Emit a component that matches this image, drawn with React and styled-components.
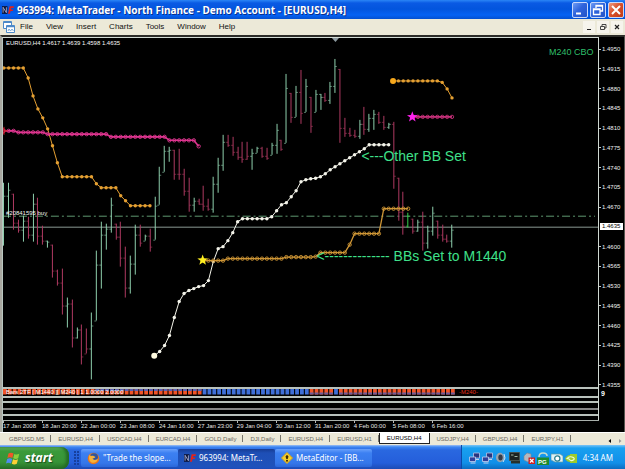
import React from "react";
import styled, { createGlobalStyle, css } from "styled-components";

const Global = createGlobalStyle`
  * { box-sizing: border-box; }
  body { margin: 0; background: #000; font-family: "Liberation Sans", Arial, sans-serif; }
  button { font: inherit; border: 0; padding: 0; margin: 0; background: none; color: inherit; cursor: default; }
`;

/* ---------- window frame ---------- */

const Desktop = styled.div`
  display: flex;
  flex-direction: column;
  min-height: 100vh;
  overflow: hidden;
`;

const TitleBar = styled.header`
  display: flex;
  align-items: center;
  gap: 3px;
  height: 19px;
  padding: 0 1px 0 2px;
  background: linear-gradient(#2b86f6 0, #0a5ae4 3px, #0355dd 9px, #0562f4 15px, #0450d0 19px);
`;

const Title = styled.h1`
  flex: 1;
  margin: 0;
  font: bold 10px/18px "Noto Sans", sans-serif;
  color: #fff;
  text-shadow: 1px 1px 0 #0a2f8a;
  white-space: nowrap;
`;

const CaptionButtons = styled.div`
  display: flex;
  gap: 2px;
`;

const CaptionButton = styled.button`
  width: 16px;
  height: 16px;
  border: 1px solid #c8d8fa;
  border-radius: 2px;
  background: ${(p) =>
    p.$close
      ? "linear-gradient(135deg, #ee9a80, #d9512c 45%, #c03a14)"
      : "linear-gradient(135deg, #6f9cf5, #2f64dc 45%, #2454c8)"};
  svg { display: block; }
`;

const MenuBar = styled.nav`
  display: flex;
  align-items: center;
  height: 16px;
  padding: 0 2px 0 3px;
  background: #ece9d8;
`;

const MenuItems = styled.div`
  display: flex;
  flex: 1;
  gap: 13px;
  margin-left: 5px;
`;

const MenuItem = styled.button`
  font-size: 8px;
  line-height: 14px;
  color: #111;
`;

const MdiButtons = styled.div`
  display: flex;
  gap: 2px;
`;

const MdiButton = styled.button`
  width: 12px;
  height: 12px;
  background: #f6f4ec;
  svg { display: block; }
`;

/* ---------- chart window ---------- */

const ChartWindow = styled.main`
  display: flex;
  flex: 1;
  border-top: 2px solid #2c2c28;
  border-left: 2px solid #a8a8a0;
  border-right: 1px solid #55554f;
  background: #000;
`;

const ChartBody = styled.div`
  flex: 1;
  min-width: 0;
  border-top: 1px solid #d4dcd6;
  border-left: 1px solid #b9c6c0;
`;

const Panes = styled.div`
  border-right: 1px solid #d0d8d2;
`;

const Plot = styled.svg`
  display: block;
  width: 100%;
  height: auto;
  font-family: "Liberation Sans", Arial, sans-serif;
`;

const IndicatorPane = styled.div`
  height: ${(p) => p.$h}px;
  border-top: 2px solid ${(p) => p.$line};
  overflow: hidden;
`;

const TimeAxis = styled.div`
  display: flex;
  height: 11px;
  border-top: 1px solid #a9b0ab;
`;

const TimeLabel = styled.span`
  flex: 0 0 6.54%;
  height: 2px;
  border-left: 1px solid #b8b8b8;
  padding-top: 1px;
  font-size: 6px;
  line-height: 8px;
  color: #e6e6e6;
  white-space: nowrap;
  text-indent: -1px;
`;

const PriceAxis = styled.aside`
  display: flex;
  flex-direction: column;
  width: 25px;
  padding-top: 7px;
`;

const Prices = styled.div`
  display: flex;
  flex-direction: column;
  justify-content: space-between;
  height: 346px;
`;

const Price = styled.span`
  display: flex;
  align-items: center;
  gap: 1px;
  height: 10px;
  font-size: 6px;
  line-height: 10px;
  color: #f0f0f0;
  &::before { content: ""; width: 2px; height: 1px; background: #c8c8c8; }
  ${(p) =>
    p.$current &&
    css`
      height: 7px;
      margin: 1px 1px 2px 1px;
      padding-left: 2px;
      background: #fff;
      color: #000;
      line-height: 7px;
      &::before { display: none; }
    `}
`;

const PaneScale = styled.span`
  padding-left: 2px;
  font: bold 7px/8px "Liberation Sans", sans-serif;
  color: #fff;
`;

/* ---------- chart tabs ---------- */

const TabStrip = styled.nav`
  display: flex;
  align-items: stretch;
  height: 13px;
  padding: 0 2px;
  border-top: 1px solid #fff;
  background: #ece9d8;
`;

const Tab = styled.button`
  height: 11px;
  padding: 0 7px;
  font-size: 6px;
  line-height: 10px;
  white-space: nowrap;
  color: #6a685f;
  background: linear-gradient(#77756c, #77756c) right 2px / 1px 7px no-repeat;
  ${(p) =>
    p.$active &&
    css`
      background: #fff;
      color: #000;
      border: solid #222;
      border-width: 0 1px 1px 1px;
    `}
`;

const TabScroll = styled.div`
  display: flex;
  gap: 6px;
  align-items: center;
  margin-left: auto;
  padding-right: 1px;
`;

/* ---------- taskbar ---------- */

const Taskbar = styled.footer`
  display: flex;
  align-items: stretch;
  height: 24px;
  background: linear-gradient(#9fc0f2 0, #3c86f3 2px, #2a68e0 5px, #245edb 18px, #1c4bb4 24px);
`;

const StartButton = styled.button`
  display: flex;
  align-items: center;
  gap: 4px;
  width: 69px;
  margin-top: 2px;
  padding-left: 6px;
  border-radius: 0 8px 8px 0;
  background: linear-gradient(#63b05f 0, #3a9a3a 4px, #379337 15px, #256f26 22px);
  box-shadow: inset -3px 0 3px #246a26;
  font: italic bold 12px/18px "Open Sans", sans-serif;
  color: #fff;
  text-shadow: 1px 1px 1px #1a4d1c;
`;

const Grip = styled.div`
  width: 5px;
  margin: 6px 2px 4px 5px;
  background: radial-gradient(circle at 1px 1px, #163f9e 1px, transparent 1px) 0 0 / 3px 3px;
`;

const TaskButton = styled.button`
  display: flex;
  align-items: center;
  gap: 3px;
  flex: 0 1 97px;
  min-width: 0;
  height: 18px;
  margin-top: 4px;
  padding-left: 6px;
  border-radius: 2px;
  font: 8px/16px "Noto Sans", sans-serif;
  color: #fff;
  white-space: nowrap;
  overflow: hidden;
  background: ${(p) =>
    p.$active ? "linear-gradient(#173c94, #1e4fb6 4px, #1f52bb)" : "linear-gradient(#68a0fa, #3c80f2 4px, #3577ea 14px, #2c67d8)"};
`;

const Tray = styled.div`
  display: flex;
  align-items: center;
  gap: 2px;
  margin-left: auto;
  padding: 2px 12px 0 7px;
  border-left: 1px solid #0b4aa8;
  background: linear-gradient(#7cc4f6 0, #19a0f0 3px, #118fe8 18px, #0c6cc0 24px);
`;

const Clock = styled.time`
  margin-left: 4px;
  font: 8px/18px "Noto Sans", sans-serif;
  color: #fff;
`;

/* ---------- chart data ---------- */

const GREEN = "#8fd0ae";
const RED = "#b03a62";

/* [high, low, rising] in plot units, one entry per four-hour bar */
const BARS = [
  [183, 246, 1], [183, 218, 1], [194, 230, 0], [220, 233, 0], [216, 242, 1], [217, 239, 0], [194, 242, 1], [198, 245, 0],
  [226, 245, 0], [241, 248, 1], [245, 278, 0], [270, 286, 0], [269, 315, 0], [298, 328, 1], [300, 348, 0], [328, 339, 1],
  [325, 365, 0], [329, 354, 0], [313, 380, 1], [251, 321, 1], [222, 289, 1], [224, 250, 1], [198, 233, 1], [224, 240, 0],
  [222, 267, 0], [247, 298, 0], [256, 294, 1], [225, 275, 1], [225, 247, 0], [235, 241, 1], [229, 252, 0], [197, 240, 1],
  [167, 205, 1], [146, 172, 1], [147, 162, 1], [150, 180, 0], [149, 180, 0], [169, 196, 0], [178, 212, 0], [198, 212, 1],
  [199, 205, 0], [186, 211, 0], [199, 211, 0], [177, 213, 1], [158, 193, 1], [135, 171, 1], [135, 147, 0], [137, 156, 0],
  [147, 160, 0], [142, 163, 0], [142, 160, 0], [149, 170, 1], [147, 153, 1], [147, 158, 0], [148, 160, 0], [143, 155, 1],
  [124, 154, 1], [140, 151, 0], [74, 143, 1], [93, 123, 0], [86, 117, 1], [70, 124, 0], [79, 112, 1], [97, 133, 0],
  [90, 112, 1], [94, 110, 1], [93, 102, 0], [82, 104, 1], [59, 93, 1], [69, 143, 0], [118, 137, 0], [128, 137, 0],
  [130, 138, 0], [120, 139, 1], [107, 135, 0], [114, 132, 1], [110, 130, 1], [112, 124, 0], [116, 130, 0], [123, 129, 1],
  [122, 189, 0], [178, 221, 0], [192, 235, 0], [213, 228, 1], [219, 234, 0], [220, 232, 1], [212, 251, 0], [226, 249, 1],
  [207, 236, 1], [221, 239, 0], [225, 242, 0], [235, 243, 0], [225, 248, 1],
];

const barX = (k) => 3.8 + 4.88 * k;
const repeat = (y, n) => Array(n).fill(y);

const UPPER_ORANGE = [...repeat(68, 5), 78, 96, 109, 118, 129, 146, 163, ...repeat(177, 7), 184, ...repeat(188, 4), 196, 201, ...repeat(206, 5)];
const PINK = [...repeat(131, 3), ...repeat(132.5, 6), ...repeat(134.3, 13), ...repeat(137, 12), ...repeat(140.5, 6), 146.5];
const WHITE = [
  356, 352, 346, 336, 318, 302, 294, 291, 289, 287, 286, 281, 262, 249, 247, 241, 233, 222, ...repeat(219, 6), 217, 211, 205, 203, 197,
  191, 182, 180, 179, 178.5, 177, 174, 170, 167, 164, 161, 158, 155, 152, 149, ...repeat(145, 5),
];
const LOWER_ORANGE = [...repeat(261, 5), ...repeat(259, 12), ...repeat(257.5, 6), 257, ...repeat(253, 6), 245, ...repeat(234, 6), ...repeat(209, 6)];
const RIGHT_ORANGE = [...repeat(81, 10), 82.5, 89, 98];
const RIGHT_PINK = repeat(117, 9);

const TIMES = [
  "17 Jan 2008", "18 Jan 20:00", "22 Jan 00:00", "23 Jan 08:00", "24 Jan 16:00", "27 Jan 23:00",
  "29 Jan 04:00", "30 Jan 12:00", "31 Jan 20:00", "4 Feb 00:00", "5 Feb 08:00", "6 Feb 16:00",
];
const PRICES = Array.from({ length: 18 }, (_, i) => (1.495 - i * 0.0035).toFixed(4));
const TABS = [
  "GBPUSD,M5", "EURUSD,H4", "USDCAD,H4", "EURCAD,H4", "GOLD,Daily", "DJI,Daily",
  "EURUSD,H4", "EURUSD,H1", "EURUSD,H4", "USDJPY,H4", "GBPUSD,H4", "EURJPY,H1",
];

/* ---------- chart drawing ---------- */

function PriceBar({ k }) {
  const closeOf = ([h, l, up]) => (up ? h + (l - h) * 0.2 : l - (l - h) * 0.2);
  const [h, l, up] = BARS[k];
  const x = Math.floor(barX(k)) + 0.5;
  const open = Math.min(l, Math.max(h, k ? closeOf(BARS[k - 1]) : 203));
  const color = k === 83 ? "#35d04a" : up ? GREEN : RED;
  return (
    <g stroke={color} fill="none">
      <path d={`M${x} ${h}V${l}`} />
      <path
        d={`M${x - 2} ${Math.round(open) + 0.5}h2M${x} ${Math.round(closeOf(BARS[k])) + 0.5}h2`}
        strokeOpacity="0.6"
      />
    </g>
  );
}

function Series({ start, values, color, width = 1, r = 1.7, ring }) {
  const pts = values.map((y, i) => [barX(start + i), y]);
  return (
    <g>
      <polyline points={pts.map((p) => p.join()).join(" ")} fill="none" stroke={color} strokeWidth={width} />
      {pts.map(([x, y], i) => (
        <circle key={i} cx={x} cy={y} r={r} fill={ring ? "none" : color} stroke={ring ? color : "none"} strokeWidth="0.9" />
      ))}
    </g>
  );
}

function Star({ x, y, color }) {
  const pts = Array.from({ length: 10 }, (_, i) => {
    const r = i % 2 ? 2.3 : 5.6;
    const a = (Math.PI / 5) * i - Math.PI / 2;
    return `${(x + r * Math.cos(a)).toFixed(2)},${(y + r * Math.sin(a)).toFixed(2)}`;
  });
  return <polygon points={pts.join(" ")} fill={color} />;
}

function MainPlot() {
  return (
    <Plot viewBox="3 38 596 350" preserveAspectRatio="xMinYMin meet" role="img" aria-label="EURUSD four-hour chart">
      <path d="M332.500 38h7l-3.500 4z" fill="#8d9aa0" />
      <path d="M3 216.500H596" stroke="#5f9a70" strokeDasharray="8 3 2 3" />
      <path d="M3 227.500H599" stroke="#8b9a94" />
      {BARS.map((_, k) => <PriceBar key={k} k={k} />)}
      <Series start={0} values={UPPER_ORANGE} color="#e5a032" />
      <Series start={0} values={PINK} color="#df3590" width={1.6} ring />
      <path d="M3 128l3 3-3 3M3 131h5M4 127v8" stroke="#c8202c" fill="none" />
      <Series start={31} values={WHITE} color="#f4f4ea" />
      <circle cx="154.500" cy="356.300" r="3" fill="#fffbe0" />
      <Series start={41} values={LOWER_ORANGE} color="#cf9636" width={1.3} ring />
      <Star x={203} y={260.500} color="#ffef20" />
      <Series start={80} values={RIGHT_ORANGE} color="#e5a032" />
      <circle cx="393.700" cy="81" r="3" fill="#f7a81c" />
      <Series start={84} values={RIGHT_PINK} color="#c43078" width={1.6} ring />
      <Star x={413} y={117} color="#ff22ee" />
      <text x="6" y="45" fontSize="6" fill="#f8f8f8">EURUSD,H4 1.4617 1.4639 1.4598 1.4635</text>
      <text x="6" y="215" fontSize="6" fill="#f2f8f2">#20841595 buy</text>
      <text x="550" y="55" fontSize="9" fill="#2fbf6a">M240 CBO</text>
      <text x="362" y="161" fontSize="14" fill="#3fe08a">&lt;---Other BB Set</text>
      <text x="317" y="261" fontSize="14" fill="#3fe08a">&lt;-------------- BBs Set to M1440</text>
    </Plot>
  );
}

function TrendStrip() {
  const isBlue = (k) => (k >= 41 && k <= 62) || k === 68;
  return (
    <Plot viewBox="3 390 596 7" preserveAspectRatio="xMinYMin meet" role="img" aria-label="Trend bars">
      {BARS.map((_, k) => (
        <g key={k}>
          <rect x={barX(k) - 0.800} y="390" width="3.800" height="5.500" fill={isBlue(k) ? "#3f6fd8" : "#f05428"} />
          {!isBlue(k) && k > 62 && <rect x={barX(k) - 0.800} y="393.500" width="3.800" height="2" fill="#6a5a9c" />}
          {k > 18 && k < 41 && <rect x={barX(k) - 0.800} y="390" width="3.800" height="2" fill="#5a62b4" />}
        </g>
      ))}
      <text x="6" y="395.500" fontSize="6" fill="#fff">Bars 2TF [ M1440 ][ M240 ] 1 1.0000 2.0000</text>
      <text x="460" y="395.500" fontSize="6" fill="#e0301c">-M240-</text>
    </Plot>
  );
}

/* ---------- icons ---------- */

const LogoIcon = () => (
  <svg width="12" height="10" viewBox="0 0 11 9" aria-hidden="true">
    <path d="M0 1h5v7H0z" fill="#0b1030" />
    <path d="M1 7V2l3 5V2" stroke="#aab4e0" fill="none" strokeWidth=".8" />
    <path d="M5.500 8L7 1h4l-.4 1.700H8.400L8.200 4h2l-.4 1.500H7.800L7.300 8z" fill="#e2231a" />
  </svg>
);

const ChartIcon = () => (
  <svg width="12" height="12" viewBox="0 0 12 12" aria-hidden="true">
    <path d="M.5.500h8v7h-8z" fill="#fff" stroke="#4d8ac8" />
    <path d="M.5 1.500h8" stroke="#4d8ac8" />
    <path d="M3.500 4.500h8v7h-8z" fill="#fff" stroke="#4d8ac8" />
    <path d="M3.500 5.500h8" stroke="#4d8ac8" strokeWidth="1.500" />
    <path d="M5 10l1-2 1.500 2L9 8l1.500 2" fill="none" stroke="#5a96cc" strokeWidth=".8" />
  </svg>
);

const FlagIcon = () => (
  <svg width="15" height="15" viewBox="0 0 15 15" aria-hidden="true">
    <path d="M2.500 2.500q2.500-1.500 5 0L6.400 7q-2.500-1.400-5 0z" fill="#f0562a" />
    <path d="M8.300 3q2.500 1.300 5-.2L12.200 7.300q-2.500 1.400-5 0z" fill="#8ccf3c" />
    <path d="M1.200 7.900q2.500-1.400 5 0L5 12.400q-2.500-1.400-5 0z" fill="#4f8cf0" />
    <path d="M7 8.300q2.500 1.400 5 0l-1.200 4.500q-2.500 1.400-5 0z" fill="#fbd034" />
  </svg>
);

const FirefoxIcon = () => (
  <svg width="13" height="13" viewBox="0 0 13 13" aria-hidden="true">
    <circle cx="6.500" cy="6.500" r="5.800" fill="#e8761c" />
    <circle cx="7" cy="5.300" r="4" fill="#31549c" />
    <path d="M4 4c2-.6 3 .2 4.500 1-1 .4-1 1.500-3 1.600 1 2 4 1.700 5.500-.3-.4 3.500-3 4.800-5.500 4.400C2.500 10.200 1.500 7 2.300 3z" fill="#f7b23a" />
  </svg>
);

const EditorIcon = () => (
  <svg width="12" height="12" viewBox="0 0 12 12" aria-hidden="true">
    <path d="M6 .5L11.500 6 6 11.500.5 6z" fill="#f6cf2c" stroke="#d9a514" strokeLinejoin="round" />
    <path d="M6 2.800l1.500 1.800L6.700 7H5.300l-.8-2.400z" fill="#3c2a08" />
    <circle cx="6" cy="8.800" r="1" fill="#3c2a08" />
  </svg>
);

const NetworkIcon = () => (
  <svg width="11" height="12" viewBox="0 0 11 12" aria-hidden="true">
    <path d="M4.500 1h6v5h-6z" fill="#28357e" stroke="#b9c4e6" strokeWidth=".8" />
    <path d="M.5 5h6v4.500h-6z" fill="#30409a" stroke="#c7d0ee" strokeWidth=".8" />
    <path d="M1.500 11h5M7 7.500h3" stroke="#c7d0ee" />
  </svg>
);

const SpeakerIcon = () => (
  <svg width="12" height="12" viewBox="0 0 12 12" aria-hidden="true">
    <ellipse cx="5" cy="5.500" rx="4" ry="4.700" fill="#9aa3ae" />
    <ellipse cx="5.500" cy="5.500" rx="2.200" ry="3" fill="#343c4a" />
    <path d="M9 2q2.500 4-1 8" fill="none" stroke="#dfe6ee" />
  </svg>
);

const TerminalIcon = () => (
  <svg width="12" height="12" viewBox="0 0 12 12" aria-hidden="true">
    <path d="M.5.500h10v8h-10z" fill="#1c2320" stroke="#48524c" />
    <path d="M2 3h2.500M5.500 4.500h3" stroke="#a0b8a4" />
    <path d="M2 9h9v2.500H2z" fill="#26302b" />
  </svg>
);

const PluginIcon = () => (
  <svg width="12" height="12" viewBox="0 0 12 12" aria-hidden="true">
    <path d="M1 4l3-3 4 1v6l-3 2-4-2z" fill="#b4b8c0" stroke="#7d848f" strokeWidth=".6" />
    <path d="M5.500 5.500H12V12H5.500z" fill="#d02020" />
    <path d="M7 7l3.500 3.500M10.500 7L7 10.500" stroke="#fff" strokeWidth="1.200" />
  </svg>
);

const GuardIcon = () => (
  <svg width="12" height="13" viewBox="0 0 12 13" aria-hidden="true">
    <path d="M2 5q0-4 4-4t4 3" fill="none" stroke="#c9dccb" strokeWidth="1.500" />
    <path d="M0 5.500h12V13H0z" fill="#1d8a2e" />
    <text x="1" y="11.500" fontSize="6" fontWeight="bold" fill="#fff">PG</text>
  </svg>
);

const CameraIcon = () => (
  <svg width="12" height="11" viewBox="0 0 12 11" aria-hidden="true">
    <path d="M0 1h9l3 2v6H4L0 7z" fill="#dff0f4" stroke="#5a98a4" strokeWidth=".7" />
    <circle cx="6.300" cy="5.500" r="2.600" fill="#fff" stroke="#2d8090" strokeWidth="1.300" />
  </svg>
);

const GpuIcon = () => (
  <svg width="12" height="9" viewBox="0 0 12 9" aria-hidden="true">
    <path d="M0 4.500Q2 1 5 1V0h7v9H5V8Q2 8 0 4.500z" fill="#9ccb2c" />
    <path d="M2 4.500Q4 2 7 3t2 2.500Q6 8 4 5z" fill="none" stroke="#f2fbd8" strokeWidth="1.100" />
  </svg>
);

/* ---------- page ---------- */

export default function App() {
  return (
    <>
      <Global />
      <Desktop>
        <TitleBar>
          <LogoIcon />
          <Title>963994: MetaTrader - North Finance - Demo Account - [EURUSD,H4]</Title>
          <CaptionButtons>
            <CaptionButton aria-label="Minimize">
              <svg width="14" height="14" viewBox="0 0 14 14"><path d="M3 10.500h5" stroke="#fff" strokeWidth="2" /></svg>
            </CaptionButton>
            <CaptionButton aria-label="Restore">
              <svg width="14" height="14" viewBox="0 0 14 14">
                <path d="M5 5V2.500h6.500V8H9M5 3h6.500M2.500 6H9v5.500H2.500zM2.500 6.500H9" fill="none" stroke="#fff" strokeWidth="1.300" />
              </svg>
            </CaptionButton>
            <CaptionButton $close aria-label="Close">
              <svg width="14" height="14" viewBox="0 0 14 14"><path d="M3 3l8 8M11 3l-8 8" stroke="#fff" strokeWidth="2" /></svg>
            </CaptionButton>
          </CaptionButtons>
        </TitleBar>

        <MenuBar aria-label="Main menu">
          <ChartIcon />
          <MenuItems>
            {["File", "View", "Insert", "Charts", "Tools", "Window", "Help"].map((m) => <MenuItem key={m}>{m}</MenuItem>)}
          </MenuItems>
          <MdiButtons>
            <MdiButton aria-label="Minimize chart">
              <svg width="12" height="12" viewBox="0 0 12 12"><path d="M4 8.500h4" stroke="#222" /></svg>
            </MdiButton>
            <MdiButton aria-label="Restore chart">
              <svg width="12" height="12" viewBox="0 0 12 12"><path d="M5 5V3.500h4V7H7.500M3.500 5.500h4v3h-4z" fill="none" stroke="#333" strokeWidth=".9" /></svg>
            </MdiButton>
            <MdiButton aria-label="Close chart">
              <svg width="12" height="12" viewBox="0 0 12 12"><path d="M4 4l4 4M8 4L4 8" stroke="#222" strokeWidth="1.200" /></svg>
            </MdiButton>
          </MdiButtons>
        </MenuBar>

        <ChartWindow>
          <ChartBody>
            <Panes>
              <MainPlot />
              <IndicatorPane $h={9} $line="#b9c2bc"><TrendStrip /></IndicatorPane>
              <IndicatorPane $h={5} $line="#b9c2bc" />
              <IndicatorPane $h={7} $line="#b9c2bc" />
              <IndicatorPane $h={6} $line="#858585" />
              <IndicatorPane $h={6} $line="#b9c2bc" />
            </Panes>
            <TimeAxis>
              {TIMES.map((t) => <TimeLabel key={t}>{t}</TimeLabel>)}
            </TimeAxis>
          </ChartBody>
          <PriceAxis>
            <Prices>
              {PRICES.map((p) => <Price key={p} $current={p === "1.4635"}>{p}</Price>)}
            </Prices>
            <PaneScale>9</PaneScale>
          </PriceAxis>
        </ChartWindow>

        <TabStrip aria-label="Open charts">
          {TABS.map((t, i) => <Tab key={i} $active={i === 8}>{t}</Tab>)}
          <TabScroll>
            <button aria-label="Scroll left"><svg width="4" height="6" viewBox="0 0 4 6"><path d="M3 1v4L.5 3z" fill="#000" /></svg></button>
            <button aria-label="Scroll right"><svg width="4" height="6" viewBox="0 0 4 6"><path d="M1 1v4l2.500-2z" fill="#999" /></svg></button>
          </TabScroll>
        </TabStrip>

        <Taskbar>
          <StartButton><FlagIcon />start</StartButton>
          <Grip />
          <TaskButton><FirefoxIcon />"Trade the slope...</TaskButton>
          <TaskButton $active><LogoIcon />963994: MetaTr...</TaskButton>
          <TaskButton><EditorIcon />MetaEditor - [BB...</TaskButton>
          <Tray>
            <NetworkIcon />
            <NetworkIcon />
            <SpeakerIcon />
            <TerminalIcon />
            <PluginIcon />
            <GuardIcon />
            <CameraIcon />
            <GpuIcon />
            <Clock>4:34 AM</Clock>
          </Tray>
        </Taskbar>
      </Desktop>
    </>
  );
}
